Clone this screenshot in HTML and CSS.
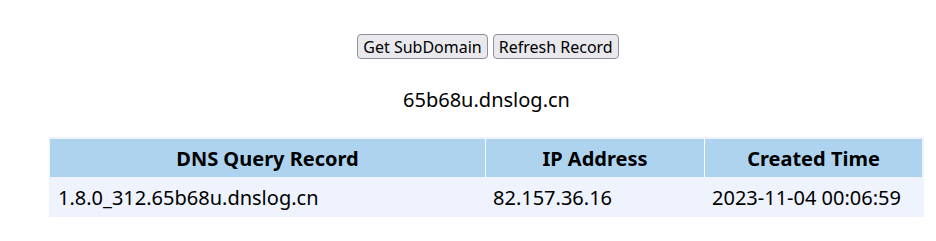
FILE: index.html
```html
<!DOCTYPE html>
<html>
    <head>
        <title>DNSLog Platform</title>
        <link rel="stylesheet" href="styles.css">
    </head>
    <body>
        <div class="wrap">
            <div class="buttonRow">
                <button class="btn">Get SubDomain</button>
                <button class="btn">Refresh Record</button>
            </div>

            <div class="domain">65b68u.dnslog.cn</div>

            <table class="records">
                <tr>
                    <th class="colName">DNS Query Record</th>
                    <th class="colIp">IP Address</th>
                    <th class="colTime">Created Time</th>
                </tr>
                <tr>
                    <td>1.8.0_312.65b68u.dnslog.cn</td>
                    <td>82.157.36.16</td>
                    <td>2023-11-04 00:06:59</td>
                </tr>
            </table>
        </div>
    </body>
</html>
```

FILE: styles.css
```css
body {
    margin: 0;
    font-family: "Noto Sans", "Open Sans", sans-serif;
    color: black;
    background-color: white;
}
.wrap {
    width: 875px;
    margin-left: 49px;
    padding-top: 34px;
    text-align: center;
}
.buttonRow {
    display: flex;
    justify-content: center;
    gap: 5px;
    margin-left: 3px;
}
.btn {
    height: 25px;
    padding: 0 5px;
    font-family: "Noto Sans", sans-serif;
    font-size: 16px;
    color: black;
    background-color: #e9e9ed;
    border: 1px solid #8f8f9d;
    border-radius: 4px;
}
.domain {
    margin-top: 28px;
    font-size: 20px;
    line-height: 26px;
}
.records {
    width: 875px;
    margin-top: 24px;
    border-spacing: 0;
    background-color: #eef3fd;
    padding: 2px 2px 0 1px;
    font-size: 20px;
}
.records th {
    height: 38px;
    padding: 0;
    background-color: #add3ef;
    font-weight: bold;
    text-align: center;
    border-left: 1px solid white;
}
.records th.colName {
    border-left: none;
    width: 435px;
}
.records th.colIp {
    width: 218px;
}
.records td {
    height: 40px;
    padding: 0 0 0 8px;
    text-align: left;
}
```
